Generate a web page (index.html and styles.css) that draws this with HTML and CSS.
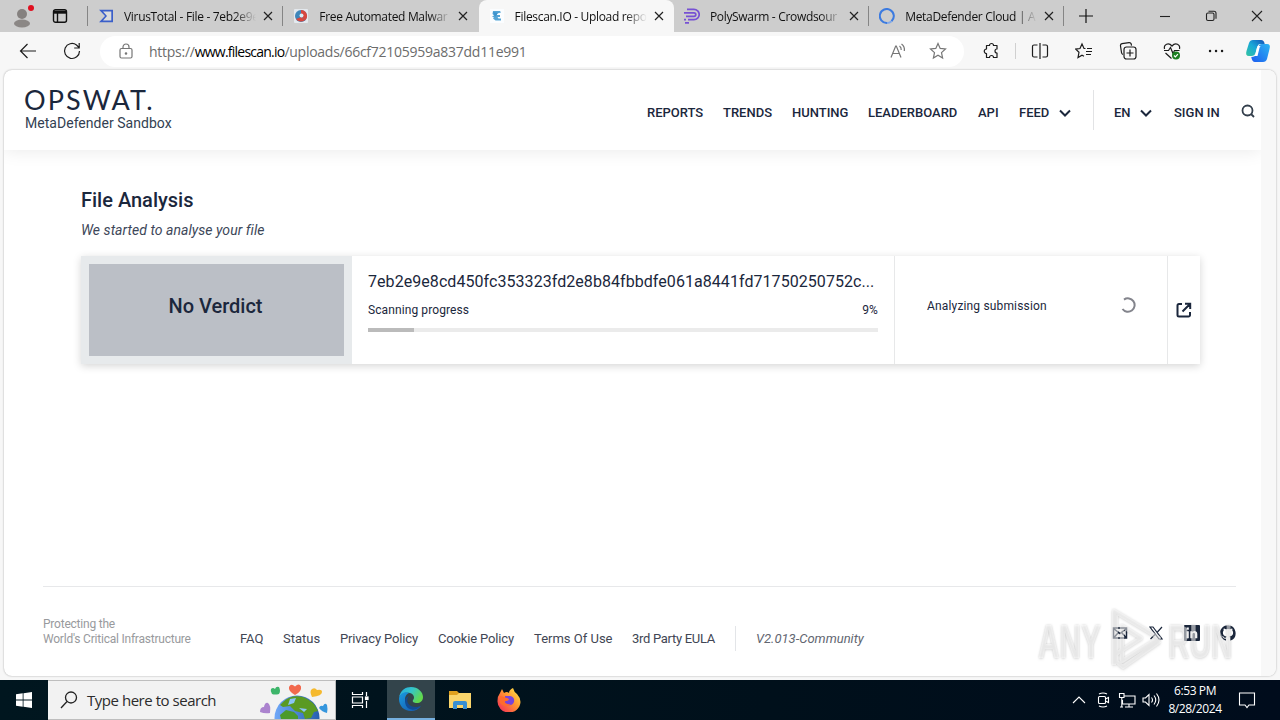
FILE: index.html
```html
<!DOCTYPE html>
<html lang="en">
<head>
    <meta charset="utf-8" />
    <meta name="viewport" content="width=device-width, initial-scale=1.0" />
    <link rel="stylesheet" href="styles.css">
    <title>Filescan.IO - Upload report</title>
</head>
<body>
    <!-- browser tabs -->
    <div class="tabstrip">
        <div class="profile">
            <svg width="24" height="26" viewBox="0 0 24 26"><circle cx="12" cy="12" r="5" fill="#85817f"/><ellipse cx="12" cy="21.5" rx="8" ry="4" fill="#8b8785"/><circle cx="21" cy="6" r="3" fill="#e01020"/></svg>
        </div>
        <div class="workspaces">
            <svg width="16" height="16" viewBox="0 0 16 16" fill="none" stroke="#111" stroke-width="1.4"><rect x="1.5" y="1.7" width="13" height="12.6" rx="2"/><path d="M2 4.2h12" stroke-width="3"/><path d="M5.5 5v9"/></svg>
        </div>
        <div class="tab">
            <svg class="favicon" viewBox="0 0 16 16"><path d="M1 2h14v12H1l6-6z" fill="#fff" fill-opacity=".3"/><path d="M1 1.8h14v12.4H1L7 8zM5 3.5L9 8l-4 4.500h8.300v-9z" fill="#3b5fc9" fill-rule="evenodd"/></svg>
            <span class="tab-title">VirusTotal - File - 7eb2e9e</span>
            <svg class="close" viewBox="0 0 10 10"><path d="M1 1l8 8M9 1l-8 8"/></svg>
        </div>
        <div class="tab">
            <svg class="favicon" viewBox="0 0 16 16"><rect x="1" y="1" width="14" height="14" rx="1" fill="#e4e9ee"/><circle cx="8" cy="8" r="6" fill="#3f86ba"/><path d="M8 2a6 6 0 0 1 4 10.500L8 8z" fill="#d8473e"/><path d="M3 11a6 6 0 0 0 9 1L8 9z" fill="#d8473e"/><circle cx="8.500" cy="7.500" r="2" fill="#d9edf5"/></svg>
            <span class="tab-title">Free Automated Malwar</span>
            <svg class="close" viewBox="0 0 10 10"><path d="M1 1l8 8M9 1l-8 8"/></svg>
        </div>
        <div class="tab active">
            <svg class="favicon" viewBox="0 0 16 16"><rect x="1" y="1" width="14" height="14" fill="#fbfdff"/><path d="M4 3h7l1 1.500-4 1v1.500h3v2H8.500l1 1.500H12v2H6.500L4 10.500l1-1-2-1 2-1L3.500 6z" fill="#55a5d6"/><path d="M4 4l5 1-3 4z" fill="#3d93cd"/></svg>
            <span class="tab-title">Filescan.IO - Upload repo</span>
            <svg class="close" viewBox="0 0 10 10"><path d="M1 1l8 8M9 1l-8 8"/></svg>
        </div>
        <div class="tab">
            <svg class="favicon" viewBox="0 0 16 16" fill="none" stroke="#7751d3" stroke-width="1.7"><path d="M3 1.300h7a5.200 5.200 0 0 1 0 10.400H4M0 4.800h10a1.800 1.800 0 0 1 0 3.600H2M0 11.700h2M1 14.800h4"/></svg>
            <span class="tab-title">PolySwarm - Crowdsour</span>
            <svg class="close" viewBox="0 0 10 10"><path d="M1 1l8 8M9 1l-8 8"/></svg>
        </div>
        <div class="tab">
            <svg class="favicon" viewBox="0 0 16 16" fill="none" stroke="#3c7be0" stroke-width="2"><path d="M12.500 13.200A7 7 0 1 0 8 15"/><path d="M8 15a7 7 0 0 0 4.500-1.800" stroke="#7fa8ea"/></svg>
            <span class="tab-title">MetaDefender Cloud | A</span>
            <svg class="close" viewBox="0 0 10 10"><path d="M1 1l8 8M9 1l-8 8"/></svg>
        </div>
        <svg class="new-tab" width="14" height="14" viewBox="0 0 14 14"><path d="M7 0v14M0 7h14" stroke="#111" stroke-width="1.200"/></svg>
        <div class="window-buttons">
            <svg width="12" height="12" viewBox="0 0 12 12"><path d="M1 6.500h10"/></svg>
            <svg width="12" height="12" viewBox="0 0 12 12"><rect x="1.500" y="3" width="7.500" height="7.500" rx="1.500"/><path d="M3.500 1.200h5.500a2 2 0 0 1 2 2v5.500"/></svg>
            <svg width="12" height="12" viewBox="0 0 12 12"><path d="M1 1l10 10M11 1L1 11"/></svg>
        </div>
    </div>

    <!-- address bar -->
    <div class="toolbar">
        <svg class="back" width="18" height="16" viewBox="0 0 18 16"><path d="M17 8H1.500M8.500 1L1.500 8l7 7"/></svg>
        <svg class="reload" width="18" height="18" viewBox="0 0 18 18"><path d="M16.500 9A7.500 7.500 0 1 1 13.500 3L16 5.500M16.200 1v5h-5"/></svg>
        <div class="address">
            <svg class="lock" width="14" height="16" viewBox="0 0 14 16"><rect x="1" y="5.500" width="12" height="9.500" rx="1.500"/><path d="M4 5.500V4a3 3 0 0 1 6 0v1.500"/><circle cx="7" cy="10.500" r=".7"/></svg>
            <span class="url">https://<b>www.filescan.io</b>/uploads/66cf72105959a837dd11e991</span>
            <svg class="read" width="16" height="16" viewBox="0 0 16 16"><path d="M1 14.500L5.700 3h.6L11 14.500M2.800 10.500h6.400M9.500 3q2 1.500 1.700 4M11.500 1q3.500 2.500 2.800 7"/></svg>
            <svg class="star" width="18" height="18" viewBox="0 0 18 18"><path d="M9 1.500l2.200 4.900 5.300.6-4 3.600 1.100 5.400L9 13.300 4.400 16l1.100-5.400-4-3.600 5.300-.6z"/></svg>
        </div>
        <div class="tools">
            <svg width="18" height="18" viewBox="0 0 18 18"><path d="M4.500 3.500h3a2 2 0 0 1 4 0h3.500v3.500a2 2 0 0 0 0 4v4.500h-3.500a2 2 0 0 0-4 0h-3v-4a2.200 2.200 0 0 1 0-4.500z" stroke-linejoin="round"/></svg>
            <i class="tool-sep"></i>
            <svg width="18" height="18" viewBox="0 0 18 18"><path d="M9 1v16M6.500 3H3a1.500 1.500 0 0 0-1.500 1.500v9A1.500 1.500 0 0 0 3 15h3.500M11.500 3H15a1.500 1.500 0 0 1 1.500 1.500v9A1.500 1.500 0 0 1 15 15h-3.500"/></svg>
            <svg width="18" height="18" viewBox="0 0 18 18"><path d="M10.500 6.500H9L7 2 5 6.500l-4.200.6 3.200 3.200-1 5.200 4-2.300 2 1M12 6.500h5M11 9.500h6M11 12.500h5"/></svg>
            <svg width="18" height="18" viewBox="0 0 18 18"><path d="M4 12.500a2.500 2.500 0 0 1-1.500-2L1.500 4A2 2 0 0 1 3 1.700l7-1a2 2 0 0 1 2.300 1.700l.2 1.200"/><rect x="5" y="5" width="12" height="12" rx="2.500"/><path d="M11 7.500v7M7.500 11h7"/></svg>
            <svg width="18" height="18" viewBox="0 0 18 18"><path d="M1.500 7C.5 2.500 5.500 0 9 4c3.500-4 8.500-1.500 7.500 3M1 8.500h4.500l2-3 2.500 6 1.500-3h5M2.500 11L8.500 16.500"/><circle cx="13" cy="13.500" r="4" fill="#1c7f22" stroke="none"/><path d="M11 13.500l1.400 1.400 2.500-2.700" stroke="#fff"/></svg>
            <svg width="18" height="18" viewBox="0 0 18 18"><path d="M3 9h.1M9 9h.1M15 9h.1" stroke-width="2.400" stroke-linecap="round"/></svg>
        </div>
        <svg class="copilot" width="26" height="24" viewBox="0 0 26 24">
            <defs>
                <linearGradient id="cp1" x1="0" y1="1" x2="1" y2="0"><stop offset="0" stop-color="#35c4a0"/><stop offset=".5" stop-color="#18a8d8"/><stop offset="1" stop-color="#1450b8"/></linearGradient>
                <linearGradient id="cp2" x1="0" y1="1" x2="1" y2="0"><stop offset="0" stop-color="#1d5cf0"/><stop offset="1" stop-color="#2cb5f2"/></linearGradient>
            </defs>
            <path d="M8 1h8q3 0 3.700 4H15q-2 0-2.800 3l-1.700 6q-.8 3-4 3H4Q0 17 1.500 12L4 4q1-3 4-3z" fill="url(#cp1)"/>
            <path d="M18 23h-8q-3 0-3.700-5 4 0 5-3l2-7q.8-3 3.700-3h5q4 0 2.500 5L22 20q-1 3-4 3z" fill="url(#cp2)"/>
            <path d="M12 8.500L10.500 15q-.4 1.500-1 2h3l2-8q.3-1.500 1.300-2h-3z" fill="#fff"/>
        </svg>
    </div>

    <!-- web page -->
    <div class="viewport">
        <div class="page">
            <header>
                <div class="logo">
                    <span class="opswat">OPSWAT.</span>
                    <span class="product">MetaDefender Sandbox</span>
                </div>
                <nav>
                    <a class="reports">REPORTS</a>
                    <a class="trends">TRENDS</a>
                    <a class="hunting">HUNTING</a>
                    <a class="leaderboard">LEADERBOARD</a>
                    <a class="api">API</a>
                    <a class="feed">FEED <svg width="12" height="8" viewBox="0 0 12 8"><path d="M1 1.500l5 5 5-5"/></svg></a>
                    <i class="nav-sep"></i>
                    <a class="lang">EN <svg width="12" height="8" viewBox="0 0 12 8"><path d="M1 1.500l5 5 5-5"/></svg></a>
                    <a class="signin">SIGN IN</a>
                    <svg class="search" width="14" height="14" viewBox="0 0 14 14"><circle cx="6.500" cy="6.500" r="5"/><path d="M10 10l3 3"/></svg>
                </nav>
            </header>

            <main>
                <h1>File Analysis</h1>
                <p class="started">We started to analyse your file</p>
                <div class="card">
                    <div class="verdict"><span>No Verdict</span></div>
                    <div class="scan">
                        <div class="hash">7eb2e9e8cd450fc353323fd2e8b84fbbdfe061a8441fd71750250752c...</div>
                        <div class="progress-label"><span>Scanning progress</span><span class="percent">9%</span></div>
                        <div class="progress"><div class="bar" style="width: 9%"></div></div>
                    </div>
                    <div class="state">
                        <span>Analyzing submission</span>
                        <svg width="16" height="16" viewBox="0 0 16 16"><path d="M4 2.600A6.700 6.700 0 1 1 2.500 12"/></svg>
                    </div>
                    <div class="open">
                        <svg width="16" height="16" viewBox="0 0 16 16"><path d="M6 2H3a1.500 1.500 0 0 0-1.500 1.500v9.500A1.500 1.500 0 0 0 3 14.500h9.500A1.500 1.500 0 0 0 14 13v-3M9 1.800h5.200V7M14 2L6.500 9.500"/></svg>
                    </div>
                </div>
            </main>

            <footer>
                <div class="slogan">Protecting the<br>World's Critical Infrastructure</div>
                <div class="links">
                    <a class="faq">FAQ</a>
                    <a class="status">Status</a>
                    <a class="privacy">Privacy Policy</a>
                    <a class="cookie">Cookie Policy</a>
                    <a class="terms">Terms Of Use</a>
                    <a class="eula">3rd Party EULA</a>
                    <i class="version">V2.013-Community</i>
                </div>
                <div class="social">
                    <svg width="16" height="16" viewBox="0 0 16 16" fill="none" stroke="#1b273c" stroke-width="1.500"><path d="M1.500 3h13v10h-13zM1.500 3.500L8 8.500l6.500-5M1.500 13l4.500-5M14.500 13L10 8"/></svg>
                    <svg width="16" height="16" viewBox="0 0 16 16" fill="none" stroke="#1b273c" stroke-width="1.200"><path d="M2 2h3l9 12h-3zM14 2L9 7.500M7 9.500L2.500 14"/></svg>
                    <svg width="16" height="16" viewBox="0 0 16 16"><rect width="16" height="16" rx="1" fill="#1b273c"/><path d="M2.500 6.200h2.300v7H2.500zM2.500 2.500h2.300v2.200H2.500zM6.300 6.200h2.200v1c1-1.800 4.800-1.600 4.800 1.700v4.300H11V9.500c0-2-2.500-1.800-2.500 0v3.700H6.300z" fill="#fff"/></svg>
                    <svg width="16" height="16" viewBox="0 0 16 16"><path fill="#1b273c" d="M8 .2C3.600.2 0 3.700 0 8.100c0 3.500 2.300 6.400 5.500 7.500.4.100.5-.2.500-.4v-1.500c-2.200.5-2.700-.9-2.700-.9-.4-.9-.9-1.200-.9-1.200-.7-.5.1-.5.100-.5.8.1 1.200.8 1.200.8.700 1.200 1.900.9 2.300.7.100-.5.300-.9.500-1.100-1.800-.2-3.600-.9-3.600-3.900 0-.9.300-1.600.8-2.100-.1-.2-.4-1 .1-2.100 0 0 .7-.2 2.200.8a7.500 7.500 0 0 1 4 0c1.500-1 2.200-.8 2.200-.8.400 1.100.2 1.900.1 2.100.5.600.8 1.300.8 2.100 0 3.100-1.900 3.700-3.700 3.900.3.300.6.800.6 1.500v2.200c0 .2.100.5.600.4A8 8 0 0 0 8 .2z"/></svg>
                </div>
            </footer>
        </div>
        <div class="scrollbar"></div>
    </div>

    <div class="watermark">
        <span>ANY</span>
        <svg width="60" height="66" viewBox="0 0 60 66"><path d="M9 58V4l45 27-37 23V19l19 12-25 16M11 8v46l7 6 37-26" /></svg>
        <span>RUN</span>
    </div>

    <!-- windows taskbar -->
    <div class="taskbar">
        <div class="start">
            <svg width="16" height="16" viewBox="0 0 16 16" fill="#fff"><path d="M0 2.200L6.700 1.300v6.300H0zM7.500 1.200L16 0v7.600H7.500zM0 8.400h6.700v6.300L0 13.800zM7.500 8.400H16V16l-8.500-1.200z"/></svg>
        </div>
        <div class="searchbox">
            <svg width="18" height="18" viewBox="0 0 18 18" fill="none" stroke="#222" stroke-width="1.300"><circle cx="11" cy="6.500" r="5.500"/><path d="M7 10.500L1 17"/></svg>
            <span>Type here to search</span>
            <svg class="earth" width="76" height="38" viewBox="0 0 76 38">
                <defs><linearGradient id="sea"><stop offset="0" stop-color="#70a8f8"/><stop offset="1" stop-color="#275fae"/></linearGradient></defs>
                <circle cx="38" cy="37" r="22.500" fill="url(#sea)"/>
                <path d="M24 21q8-8 20-5 11 4 15 14l-4 1-3 6-6 1-2-6-8-2-5-5-7 1-3-2z" fill="#5a9a22"/>
                <path d="M21 34l6-5 8 2 4 4v3H22z" fill="#4c9a2a"/>
                <path d="M31 18l6-1-2 5-6 2zM40 27l8 1-3 3z" fill="#8bc5f5"/>
                <path d="M36 14q-7-4-6-8 2-4 6-.5 4-4 6 0 1 5-6 8.500z" fill="#f2694e"/>
                <path d="M13 13q-2-3-1-5 2-2 4 0 1-3 4-2 2 4 0 7-4 1-7 0z" fill="#3db56a"/>
                <path d="M53 16q-3-6 0-8 3-2 5 1 5-1 5 2 0 4-10 5z" fill="#f5b92e"/>
                <path d="M1 31q0-5 4-5 1-5 4-4 3 2 2 10-5 1-10-1z" fill="#ab83ce"/>
                <path d="M60 27q1-3 4-2 2-4 4-1 1 4 0 8-5-1-8-5z" fill="#3596dd"/>
            </svg>
        </div>
        <div class="app taskview">
            <svg width="18" height="18" viewBox="0 0 18 18" fill="none" stroke="#fff" stroke-width="1.200"><path d="M1.500 1v2.500h10V1M1.500 17v-2.500h10V17M1.500 6h10v6h-10zM15.500 1v4M15.500 10v7"/><rect x="14.500" y="6" width="2.500" height="2.500" fill="#fff"/></svg>
        </div>
        <div class="app current">
            <svg width="26" height="26" viewBox="0 0 26 26">
                <defs>
                    <linearGradient id="e1" x1="0" y1="0" x2="1" y2=".5"><stop offset="0" stop-color="#25a8e0"/><stop offset=".5" stop-color="#34c5cb"/><stop offset="1" stop-color="#62d94c"/></linearGradient>
                    <linearGradient id="e2" x1="0" y1="0" x2="1" y2="1"><stop offset="0" stop-color="#1a9ae0"/><stop offset="1" stop-color="#1553a8"/></linearGradient>
                </defs>
                <path d="M1 12C2 4 8 1 13 1c7 0 12 5 12 10 0 4-3 6-6 6-3 0-5-1-4-3 2-2 1-6-3-7C7 6 2 8 1 12z" fill="url(#e1)"/>
                <path d="M1 13c0-5 6-8 10-6-4 2-5 6-3 10s9 6 15 3c-2 3-6 5-10 5C6 25 1 20 1 13z" fill="url(#e2)"/>
                <path d="M11 10c-3 3-2 8 2 10s7 1 10-.5c-5 6-13 5-15 0s-1-8 3-9.500z" fill="#124a92"/>
            </svg>
        </div>
        <div class="app">
            <svg width="22" height="20" viewBox="0 0 22 20"><path d="M0 1h8l2 2h12v5H0z" fill="#e0a11e"/><path d="M0 5h8l2-2h12v15H0z" fill="#fad56b"/><path d="M4 19v-6q0-2 2-2h10q2 0 2 2v6h-4v-4H8v4z" fill="#378fd3"/></svg>
        </div>
        <div class="app">
            <svg width="24" height="24" viewBox="0 0 24 24">
                <defs><linearGradient id="ff" x1="1" y1="0" x2="0" y2="1"><stop offset="0" stop-color="#fff04a"/><stop offset=".45" stop-color="#ff9530"/><stop offset="1" stop-color="#f4205c"/></linearGradient></defs>
                <path d="M3 5l2-4 2 4q3-2 5 0 0-3 4-5 1 4 4 6 3 3 3.500 8A11.500 11 0 0 1 .5 13Q.5 8 3 5z" fill="url(#ff)"/>
                <path d="M8 8h5q5 1 4 6-2 4-6 3-4-1-3-4l4-1q-1-2-4-2z" fill="#7544dc"/>
                <path d="M3 8l4 1 5 2q-2 3-5 2 2 4 7 3-6 5-11-1z" fill="#ff6b2b"/>
            </svg>
        </div>
        <div class="tray">
            <svg class="caret" width="14" height="8" viewBox="0 0 14 8"><path d="M1 7l6-6 6 6"/></svg>
            <svg class="camera" width="14" height="16" viewBox="0 0 14 16"><rect x="2.500" y="4.500" width="7" height="7" rx="1"/><path d="M9.500 7l3-1.500v5l-3-1.500M3 2q4-2 8 0M3 14q4 2 8 0"/></svg>
            <svg class="network" width="18" height="16" viewBox="0 0 18 16"><path d="M6.500 4H17v8H4.500V8M11 12v3M7 15h8M1.500 1.500h4.500v4H1.500zM3.800 5.500V15M2 15h3"/></svg>
            <svg class="volume" width="18" height="16" viewBox="0 0 18 16"><path d="M1 6h2.500L7 2.500v11L3.500 10H1zM9.500 5.500q2 2.500 0 5M12 3.500q3.500 4.500 0 9M14.500 1.500q5 6.500 0 13"/></svg>
            <div class="clock">6:53 PM<br>8/28/2024</div>
            <svg class="notify" width="18" height="18" viewBox="0 0 18 18"><path d="M1.500 2h15v12H11l-2 2.500L7 14H1.500z"/></svg>
        </div>
    </div>
</body>
</html>
```
FILE: styles.css
```css
* {
    box-sizing: border-box;
}
body {
    margin: 0;
    width: 1280px;
    height: 720px;
    overflow: hidden;
    background: #f7f7f7;
    font-family: Roboto, sans-serif;
    color: #1b273c;
    display: flex;
    flex-direction: column;
}
svg {
    flex: none;
    display: block;
}

/* tabs */
.tabstrip {
    height: 32px;
    flex: none;
    background: #cdcdcd;
    display: flex;
    align-items: center;
}
.profile {
    width: 44px;
    padding-left: 10px;
    height: 28px;
}
.workspaces {
    width: 44px;
    padding-left: 8px;
}
.tab {
    width: 195.3px;
    height: 32px;
    flex: none;
    display: flex;
    align-items: center;
    padding-left: 10px;
    position: relative;
    font-family: "Open Sans", sans-serif;
    font-size: 12px;
    letter-spacing: -.32px;
    color: #111;
}
.tab::before {
    content: "";
    position: absolute;
    left: -1px;
    top: 6px;
    width: 1px;
    height: 20px;
    background: #858585;
}
.tab.active::before, .tab.active + .tab::before {
    display: none;
}
.tabstrip .tab:nth-child(7)::after {
    content: "";
    position: absolute;
    right: 0;
    top: 6px;
    width: 1px;
    height: 20px;
    background: #858585;
}
.tab.active {
    background: #f7f7f7;
    border-radius: 8px 8px 0 0;
}
.favicon {
    width: 16px;
    height: 16px;
}
.tab-title {
    margin-left: 10px;
    width: 139px;
    white-space: nowrap;
    mask-image: linear-gradient(to right, #000 110px, transparent 132px);
}
.close {
    width: 10px;
    height: 10px;
    stroke: #222;
    stroke-width: 1.2;
}
.new-tab {
    margin-left: 15px;
}
.window-buttons {
    margin-left: auto;
    display: flex;
    gap: 34px;
    padding-right: 17px;
}
.window-buttons svg {
    fill: none;
    stroke: #222;
    stroke-width: 1.1;
}

/* toolbar */
.toolbar {
    height: 38px;
    flex: none;
    display: flex;
    align-items: center;
    background: #f7f7f7;
}
.toolbar svg {
    fill: none;
    stroke: #1c1c1c;
    stroke-width: 1.2;
}
.toolbar .back {
    margin-left: 19px;
}
.toolbar .reload {
    margin-left: 26px;
}
.address {
    width: 864px;
    height: 31px;
    margin-left: 19px;
    border-radius: 16px;
    background: #fff;
    display: flex;
    align-items: center;
    padding: 0 17px 0 19px;
}
.address svg {
    stroke: #767676;
}
.url {
    margin-left: 16px;
    font-family: "Open Sans", sans-serif;
    font-size: 14px;
    letter-spacing: -.26px;
    color: #6c6c6c;
}
.url b {
    font-weight: normal;
    letter-spacing: -.77px;
    color: #000;
}
.address .read {
    margin-left: auto;
}
.address .star {
    margin-left: 23px;
}
.tools {
    display: flex;
    align-items: center;
    margin-left: 18px;
    gap: 26px;
}
.tool-sep {
    width: 1px;
    height: 16px;
    background: #d0d0d0;
    margin: 0 -11px;
}
.toolbar .copilot {
    margin-left: 20px;
    stroke: none;
}

/* page */
.viewport {
    width: 1272px;
    height: 606px;
    margin: 0 0 0 4px;
    border-radius: 8px;
    overflow: hidden;
    background: #fff;
    display: flex;
    flex: none;
    box-shadow: 0 0 2px rgba(0, 0, 0, .35);
}
.page {
    width: 1257px;
    display: flex;
    flex-direction: column;
}
.scrollbar {
    flex: 1;
    background: #f8f8f8;
}
header {
    height: 80px;
    flex: none;
    display: flex;
    justify-content: space-between;
    padding: 0 6px 0 21px;
    box-shadow: 0 2px 16px rgba(0, 0, 0, .08);
}
.logo {
    display: flex;
    flex-direction: column;
    padding-top: 16px;
}
.opswat {
    font-family: Lato, sans-serif;
    font-size: 27px;
    line-height: 28px;
    letter-spacing: 2.1px;
    margin-left: -1px;
}
.product {
    font-size: 14px;
    line-height: 16px;
    margin-top: 1px;
    letter-spacing: .03px;
    color: #333f52;
}
nav {
    display: flex;
    align-items: center;
    height: 80px;
    padding-top: 5px;
    font-size: 13px;
    font-weight: 500;
    white-space: nowrap;
}
nav a {
    margin-right: 20px;
}
nav a svg {
    display: inline-block;
    margin-left: 6px;
    fill: none;
    stroke: #1b273c;
    stroke-width: 2;
}
.reports {
    width: 56px;
}
.trends {
    width: 49px;
}
.hunting {
    width: 56px;
}
.leaderboard {
    width: 90px;
}
.api {
    width: 21px;
}
.feed {
    width: 54px;
}
.nav-sep {
    width: 1px;
    height: 40px;
    margin-top: -5px;
    background: #e2e3e5;
    margin-right: 20px;
}
.lang {
    width: 40px;
}
.signin {
    width: 46px;
}
nav .search {
    margin: -3px 0 0 1px;
    fill: none;
    stroke: #333f4c;
    stroke-width: 1.8;
}
main {
    padding: 38px 61px 0 77px;
    height: 436px;
}
h1 {
    margin: 0;
    font-size: 20px;
    line-height: 24px;
    font-weight: 500;
}
.started {
    margin: 9px 0 0;
    font-size: 14px;
    line-height: 18px;
    font-style: italic;
    letter-spacing: .04px;
    color: #3d4759;
}
.card {
    margin-top: 17px;
    height: 108px;
    display: flex;
    background: #fff;
    box-shadow: 0 2px 8px rgba(0, 0, 0, .17);
}
.verdict {
    width: 271px;
    padding: 8px;
    background: #e7eaec;
}
.verdict span {
    display: flex;
    height: 92px;
    align-items: center;
    justify-content: center;
    padding: 0 2px 8px 0;
    background: #bbbfc6;
    font-size: 20px;
    font-weight: 500;
}
.scan {
    width: 542px;
    padding: 16px 16px 0;
}
.hash {
    font-size: 16px;
    line-height: 20px;
    white-space: nowrap;
    letter-spacing: .06px;
}
.progress-label {
    display: flex;
    justify-content: space-between;
    margin-top: 10px;
    font-size: 12px;
    line-height: 16px;
    letter-spacing: .1px;
}
.progress {
    margin-top: 10px;
    height: 4px;
    background: #ebebeb;
}
.bar {
    height: 4px;
    background: #bbb;
}
.state {
    width: 273px;
    border-left: 1px solid #e7e8e9;
    padding: 0 31px 8px 32px;
    display: flex;
    align-items: center;
    justify-content: space-between;
    font-size: 12px;
    letter-spacing: .16px;
}
.state svg {
    margin-bottom: 3px;
    fill: none;
    stroke: #83848c;
    stroke-width: 2;
}
.open {
    flex: 1;
    border-left: 1px solid #e7e8e9;
    display: flex;
    align-items: center;
    justify-content: center;
}
.open svg {
    fill: none;
    stroke: #1b273c;
    stroke-width: 2;
}
footer {
    margin: 0 25px 0 39px;
    border-top: 1px solid #e7e8ea;
    display: flex;
    height: 90px;
    padding-top: 29px;
}
.slogan {
    width: 197px;
    flex: none;
    margin-top: 1px;
    font-size: 12px;
    line-height: 15px;
    letter-spacing: -.22px;
    color: #989a9d;
}
.links {
    display: flex;
    margin-top: 10px;
    height: 25px;
    gap: 20px;
    font-size: 13px;
    line-height: 25px;
    color: #414654;
    white-space: nowrap;
}
.faq {
    width: 23px;
}
.status {
    width: 37px;
}
.privacy {
    width: 78px;
    letter-spacing: -.15px;
}
.cookie {
    width: 76px;
    letter-spacing: -.15px;
}
.terms {
    width: 78px;
}
.eula {
    width: 83px;
    letter-spacing: -.3px;
}
.version {
    border-left: 1px solid #e3e5e8;
    padding-left: 20px;
    color: #626671;
}
.social {
    margin-left: auto;
    padding-top: 9px;
    display: flex;
    gap: 20px;
}

/* recorder watermark, floats over the page */
.watermark {
    position: absolute;
    left: 1038px;
    top: 607px;
    display: flex;
    align-items: center;
    font-family: "Liberation Sans", sans-serif;
    font-size: 48px;
    font-weight: bold;
    color: rgba(255, 255, 255, .55);
    filter: drop-shadow(0 0 1px rgba(0, 0, 0, .32)) drop-shadow(0 2px 1px rgba(0, 0, 0, .08));
}
.watermark span {
    width: 67px;
    padding-top: 2px;
    white-space: nowrap;
    transform: scaleX(.62);
    transform-origin: left;
}
.watermark svg {
    fill: none;
    stroke: rgba(255, 255, 255, .5);
    stroke-width: 4;
    stroke-linejoin: round;
    margin-right: 3px;
}

/* taskbar */
.taskbar {
    margin-top: 4px;
    height: 40px;
    flex: none;
    display: flex;
    background: linear-gradient(to right, #00161f, #00101b 60%, #000c1c);
}
.start {
    width: 48px;
    display: flex;
    align-items: center;
    justify-content: center;
}
.searchbox {
    width: 288px;
    background: #f2f2f2;
    border: 1px solid #bebebe;
    border-left: none;
    display: flex;
    align-items: center;
    padding-left: 12px;
    font-family: "Open Sans", sans-serif;
    font-size: 15px;
    letter-spacing: -.47px;
    color: #2c2c2c;
}
.searchbox span {
    margin-left: 9px;
    white-space: nowrap;
}
.earth {
    margin-left: auto;
}
.app {
    width: 49px;
    display: flex;
    align-items: center;
    justify-content: center;
}
.taskview {
    width: 51px;
    padding-right: 3px;
}
.current {
    width: 48px;
    background: #33444b;
    border-bottom: 2px solid #76b0df;
}
.tray {
    margin-left: auto;
    display: flex;
    align-items: center;
    padding-right: 24px;
}
.tray svg {
    fill: none;
    stroke: #fff;
    stroke-width: 1.1;
}
.tray .caret {
    margin-right: 10px;
}
.tray .camera {
    margin-right: 8px;
}
.tray .network {
    margin-right: 6px;
}
.tray .volume {
    margin-right: -1px;
}
.clock {
    width: 72px;
    text-align: center;
    font-family: "Open Sans", sans-serif;
    font-size: 12px;
    line-height: 18px;
    letter-spacing: -.4px;
    color: #fff;
}
.tray .notify {
    margin: 0 0 0 7px;
}
```
